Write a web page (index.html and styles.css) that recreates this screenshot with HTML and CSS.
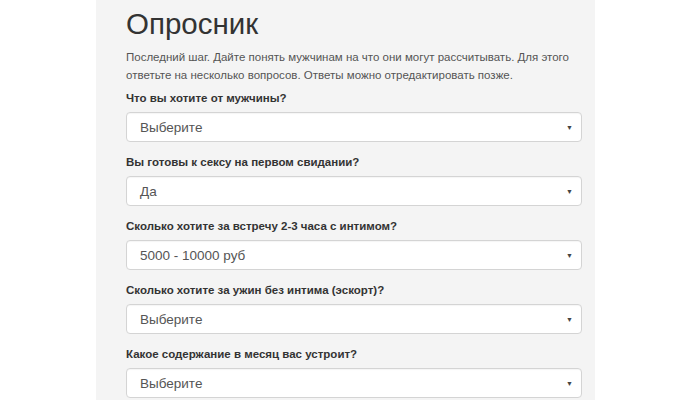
FILE: index.html
```html
<!DOCTYPE html>
<html lang="ru">
<head>
<meta charset="utf-8">
<title>Опросник</title>
<link rel="stylesheet" href="styles.css">
</head>
<body>
<div class="panel">
  <h1 class="title">Опросник</h1>
  <p class="intro">Последний шаг. Дайте понять мужчинам на что они могут рассчитывать. Для этого ответьте на несколько вопросов. Ответы можно отредактировать позже.</p>
  <div class="field">
    <div class="label">Что вы хотите от мужчины?</div>
    <div class="select"><span class="value">Выберите</span><span class="arrow">▼</span></div>
  </div>
  <div class="field">
    <div class="label">Вы готовы к сексу на первом свидании?</div>
    <div class="select"><span class="value">Да</span><span class="arrow">▼</span></div>
  </div>
  <div class="field">
    <div class="label">Сколько хотите за встречу 2-3 часа с интимом?</div>
    <div class="select"><span class="value">5000 - 10000 руб</span><span class="arrow">▼</span></div>
  </div>
  <div class="field">
    <div class="label">Сколько хотите за ужин без интима (эскорт)?</div>
    <div class="select"><span class="value">Выберите</span><span class="arrow">▼</span></div>
  </div>
  <div class="field">
    <div class="label">Какое содержание в месяц вас устроит?</div>
    <div class="select"><span class="value">Выберите</span><span class="arrow">▼</span></div>
  </div>
</div>
</body>
</html>
```
FILE: styles.css
```css
html, body {
  margin: 0;
  padding: 0;
  background: #ffffff;
  height: 400px;
  overflow: hidden;
  font-family: "Liberation Sans", Arial, sans-serif;
}
.panel {
  margin-left: 96px;
  width: 499px;
  height: 400px;
  box-sizing: border-box;
  padding: 6px 13px 0 30px;
  background: #f4f4f4;
}
.title {
  margin: 0;
  font-size: 29.5px;
  line-height: 35px;
  font-weight: normal;
  color: #333333;
}
.intro {
  margin: 7px 0 5px;
  font-size: 11.5px;
  line-height: 18px;
  color: #555555;
}
.field {
  margin-bottom: 11px;
}
.label {
  font-size: 11.5px;
  line-height: 18px;
  font-weight: bold;
  color: #333333;
  margin-bottom: 5px;
}
.select {
  height: 30px;
  box-sizing: border-box;
  background: #ffffff;
  border: 1px solid #d4d4d4;
  border-radius: 4px;
  box-shadow: inset 0 1px 1px rgba(0,0,0,0.04);
  display: flex;
  align-items: center;
  justify-content: space-between;
  padding: 0 8px 0 13px;
}
.value {
  font-size: 13.5px;
  color: #555555;
}
.arrow {
  font-size: 7px;
  color: #444444;
}
```
